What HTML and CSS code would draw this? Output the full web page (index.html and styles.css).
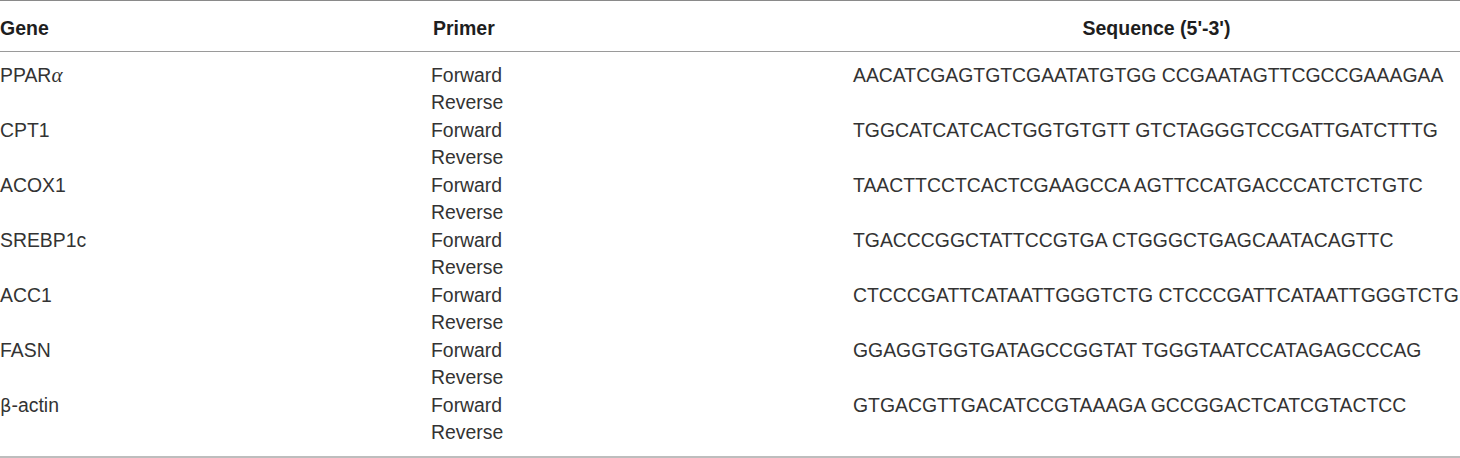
FILE: index.html
```html
<!DOCTYPE html>
<html lang="en">
<head>
<meta charset="utf-8">
<title>Primer sequences</title>
<link rel="stylesheet" href="styles.css">
</head>
<body>
<table class="primers">
  <thead>
    <tr>
      <th class="col-gene">Gene</th>
      <th class="col-primer">Primer</th>
      <th class="col-seq">Sequence (5'-3')</th>
    </tr>
  </thead>
  <tbody>
    <tr class="first">
      <td>PPAR<span class="greek">α</span></td>
      <td>Forward<br>Reverse</td>
      <td class="seq">AACATCGAGTGTCGAATATGTGG CCGAATAGTTCGCCGAAAGAA</td>
    </tr>
    <tr>
      <td>CPT1</td>
      <td>Forward<br>Reverse</td>
      <td class="seq">TGGCATCATCACTGGTGTGTT GTCTAGGGTCCGATTGATCTTTG</td>
    </tr>
    <tr>
      <td>ACOX1</td>
      <td>Forward<br>Reverse</td>
      <td class="seq">TAACTTCCTCACTCGAAGCCA AGTTCCATGACCCATCTCTGTC</td>
    </tr>
    <tr>
      <td>SREBP1c</td>
      <td>Forward<br>Reverse</td>
      <td class="seq">TGACCCGGCTATTCCGTGA CTGGGCTGAGCAATACAGTTC</td>
    </tr>
    <tr>
      <td>ACC1</td>
      <td>Forward<br>Reverse</td>
      <td class="seq">CTCCCGATTCATAATTGGGTCTG CTCCCGATTCATAATTGGGTCTG</td>
    </tr>
    <tr>
      <td>FASN</td>
      <td>Forward<br>Reverse</td>
      <td class="seq">GGAGGTGGTGATAGCCGGTAT TGGGTAATCCATAGAGCCCAG</td>
    </tr>
    <tr class="last">
      <td><span class="greek-b">β</span>-actin</td>
      <td>Forward<br>Reverse</td>
      <td class="seq">GTGACGTTGACATCCGTAAAGA GCCGGACTCATCGTACTCC</td>
    </tr>
  </tbody>
</table>
</body>
</html>
```

FILE: styles.css
```css
html, body {
  margin: 0;
  padding: 0;
  background: #ffffff;
  overflow: hidden;
}

body {
  font-family: "Liberation Sans", Arial, sans-serif;
  color: #333333;
  width: 1460px;
}

.primers {
  width: 1460px;
  border-collapse: collapse;
  table-layout: fixed;
  font-size: 19.4px;
  line-height: 27.5px;
}

.primers thead th {
  font-weight: bold;
  font-size: 19.5px;
  text-align: left;
  padding: 14px 0 8px 0;
  border-top: 1px solid #8a8a8a;
  border-bottom: 1px solid #9a9a9a;
  color: #1e1e1e;
  white-space: nowrap;
}

.primers .col-gene {
  width: 431px;
}

.primers .col-primer {
  width: 420px;
  padding-left: 2px;
}

.primers .col-seq {
  text-align: center;
}

.primers td {
  padding: 0;
  vertical-align: top;
  white-space: nowrap;
  font-weight: normal;
}

.primers tr.first td {
  padding-top: 10px;
}

.primers tr.last td {
  padding-bottom: 9px;
  border-bottom: 2px solid #bdbdbd;
}

.primers td.seq {
  overflow: visible;
}

.greek {
  font-family: "Liberation Serif", "Times New Roman", serif;
  font-style: italic;
  font-size: 21px;
}

.greek-b {
  font-family: "DejaVu Sans", sans-serif;
  font-size: 18px;
}
```
